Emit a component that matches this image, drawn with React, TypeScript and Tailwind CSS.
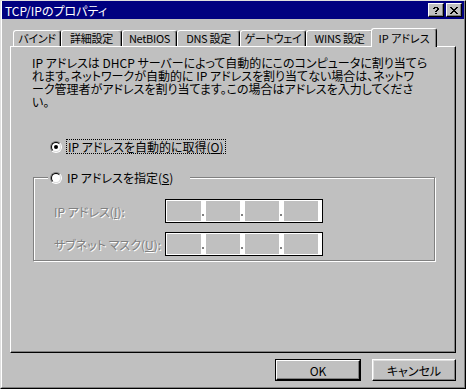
import type { ReactNode } from "react"

const TABS = [
  { label: "バインド", w: 48 },
  { label: "詳細設定", w: 61 },
  { label: "NetBIOS", w: 55 },
  { label: "DNS 設定", w: 63 },
  { label: "ゲートウェイ", w: 66 },
  { label: "WINS 設定", w: 67 },
]

const HELP = [".XXXX.", "XX..XX", "....XX", "...XX.", "..XX..", "......", "..XX.."]
const CLOSE = ["XX....XX", ".XX..XX.", "..XXXX..", "...XX...", "..XXXX..", ".XX..XX.", "XX....XX"]

function Pixels({ rows }: { rows: string[] }) {
  return (
    <svg width={rows[0].length} height={rows.length} shapeRendering="crispEdges">
      {rows.flatMap((r, y) =>
        r.split("").map((c, x) =>
          c === "X" ? <rect key={`${x}-${y}`} x={x} y={y} width={1} height={1} fill="#000" /> : null
        )
      )}
    </svg>
  )
}

function CaptionButton({ children, className = "" }: { children: ReactNode; className?: string }) {
  return (
    <div
      className={`flex h-[14px] w-[16px] items-center justify-center border border-b-black border-l-white border-r-black border-t-white bg-[#c0c0c0] shadow-[inset_-1px_-1px_0_#808080] ${className}`}
    >
      {children}
    </div>
  )
}

function Radio({ checked }: { checked?: boolean }) {
  return (
    <span className="flex h-[12px] w-[12px] shrink-0 items-center justify-center rounded-full border border-b-white border-l-[#808080] border-r-white border-t-[#808080]">
      <span className="flex h-[10px] w-[10px] items-center justify-center rounded-full border border-b-[#dfdfdf] border-l-black border-r-[#dfdfdf] border-t-black bg-white">
        {checked && <span className="h-[4px] w-[4px] rounded-full bg-black" />}
      </span>
    </span>
  )
}

function IpField() {
  return (
    <div className="flex h-[24px] w-[158px] items-stretch border border-black bg-white py-[1px] pl-[1px]">
      {[0, 1, 2, 3].map((i) => (
        <div key={i} className="flex">
          <div className="w-[34px] bg-[#c0c0c0]" />
          {i < 3 && (
            <div className="flex w-[5px] items-end pb-[5px] pl-[1px]">
              <div className="h-[2px] w-[2px] bg-[#808080]" />
            </div>
          )}
        </div>
      ))}
    </div>
  )
}

export default function App() {
  return (
    <div className="h-[389px] w-[466px] overflow-hidden border border-b-black border-l-[#dfdfdf] border-r-black border-t-[#dfdfdf] bg-[#c0c0c0] font-['Noto_Sans_CJK_JP','Noto_Sans',sans-serif] text-[12px] leading-[13px] text-black [font-feature-settings:'palt']">
      <div className="flex h-full flex-col border-b border-l border-r border-b-[#808080] border-l-white border-r-[#808080]">
        {/* title bar */}
        <div className="flex h-[18px] items-center bg-[#000080] px-[2px]">
          <span className="flex-1 pl-[1px] text-white">TCP/IPのプロパティ</span>
          <CaptionButton>
            <Pixels rows={HELP} />
          </CaptionButton>
          <CaptionButton className="ml-[2px]">
            <Pixels rows={CLOSE} />
          </CaptionButton>
        </div>

        <div className="flex flex-col px-[8px]">
          {/* tabs */}
          <div className="mt-[9px] flex h-[18px] items-end pl-[3px] text-[11px]">
            {TABS.map((t) => (
              <div
                key={t.label}
                style={{ width: t.w }}
                className="flex h-[16px] items-center justify-center overflow-hidden whitespace-nowrap rounded-t-[3px] border-l border-r border-t border-l-white border-r-black border-t-white tracking-[-0.3px] shadow-[inset_-1px_0_0_#808080]"
              >
                {t.label}
              </div>
            ))}
            <div className="relative z-10 -mb-px -ml-[2px] flex h-[19px] w-[66px] items-start justify-center whitespace-nowrap rounded-t-[3px] border-l border-r border-t border-l-white border-r-black border-t-white bg-[#c0c0c0] pt-[3px] shadow-[inset_-1px_0_0_#808080]">
              IP アドレス
            </div>
          </div>

          {/* panel */}
          <div className="relative flex h-[307px] flex-col border border-b-black border-l-white border-r-black border-t-white pl-[21px] pt-[9px] shadow-[inset_-1px_-1px_0_#808080]">
            <div className="whitespace-nowrap">
              <div>IP アドレスは DHCP サーバーによって自動的にこのコンピュータに割り当てら</div>
              <div>れます。ネットワークが自動的に IP アドレスを割り当てない場合は、ネットワ</div>
              <div>ーク管理者がアドレスを割り当てます。この場合はアドレスを入力してくださ</div>
              <div>い。</div>
            </div>

            <div className="ml-[18px] mt-[30px] flex h-[17px] items-center">
              <Radio checked />
              <span className="ml-[4px] border border-dotted border-black px-[1px] leading-[13px]">
                IP アドレスを自動的に取得(<span className="underline">O</span>)
              </span>
            </div>

            <fieldset className="ml-[1px] mt-[14px] h-[92px] w-[402px] border border-[#808080] shadow-[inset_1px_1px_0_#fff,1px_1px_0_#fff]">
              <legend className="ml-[14px] flex h-[17px] w-[142px] items-center bg-[#c0c0c0] pl-[2px]">
                <Radio />
                <span className="ml-[5px]">
                  IP アドレスを指定(<span className="underline">S</span>)
                </span>
              </legend>
              <div className="flex flex-col gap-[9px] pl-[20px] pt-[13px] text-[#808080] [text-shadow:1px_1px_0_#fff]">
                <div className="flex items-center">
                  <span className="w-[111px] whitespace-nowrap">
                    IP アドレス(<span className="underline">I</span>):
                  </span>
                  <IpField />
                </div>
                <div className="flex items-center">
                  <span className="w-[111px] whitespace-nowrap">
                    サブネット マスク(<span className="underline">U</span>):
                  </span>
                  <IpField />
                </div>
              </div>
            </fieldset>
          </div>

          {/* dialog buttons */}
          <div className="mt-[6px] flex justify-end gap-[11px]">
            <div className="h-[22px] w-[86px] border border-black">
              <div className="flex h-full items-center justify-center border border-b-black border-l-white border-r-black border-t-white shadow-[inset_-1px_-1px_0_#808080]">
                OK
              </div>
            </div>
            <div className="flex h-[22px] w-[84px] items-center justify-center border border-b-black border-l-white border-r-black border-t-white shadow-[inset_-1px_-1px_0_#808080,inset_1px_1px_0_#dfdfdf]">
              キャンセル
            </div>
          </div>
        </div>
      </div>
    </div>
  )
}
